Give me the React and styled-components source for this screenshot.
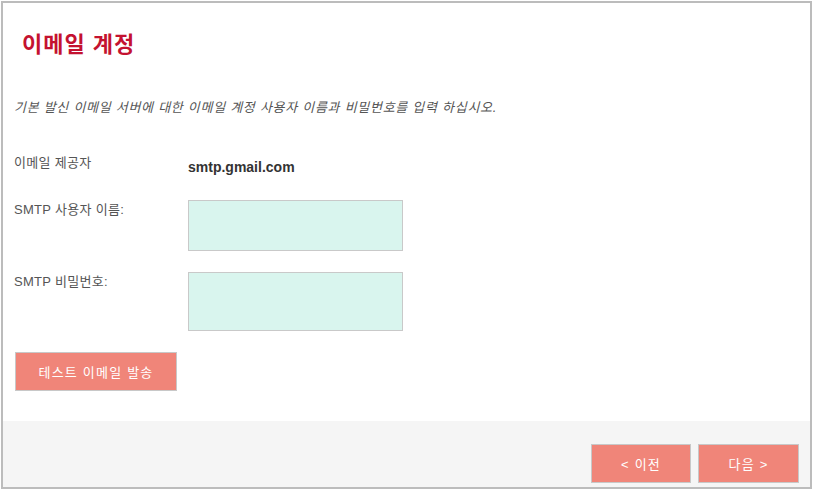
import React from "react";
import styled, { createGlobalStyle } from "styled-components";

const GlobalStyle = createGlobalStyle`
  body {
    margin: 0;
    background: #ffffff;
    font-family: "Liberation Sans", "Noto Sans CJK KR", sans-serif;
  }
`;

export default function App() {
  return (
    <>
      <GlobalStyle />
      <Frame>
        <Main>
          <Title>이메일 계정</Title>
          <Intro>기본 발신 이메일 서버에 대한 이메일 계정 사용자 이름과 비밀번호를 입력 하십시오.</Intro>
          <Form>
            <Row>
              <Label>이메일 제공자</Label>
              <Value>smtp.gmail.com</Value>
            </Row>
            <Row>
              <Label>SMTP 사용자 이름:</Label>
              <Field type="text" $h={51} />
            </Row>
            <Row>
              <Label>SMTP 비밀번호:</Label>
              <Field type="password" $h={59} />
            </Row>
          </Form>
          <Button $w={162}>테스트 이메일 발송</Button>
        </Main>
        <Footer>
          <Button $w={100}>&lt; 이전</Button>
          <Button $w={101}>다음 &gt;</Button>
        </Footer>
      </Frame>
    </>
  );
}

//styled-components

const Frame = styled.div`
  margin: 1px 0 0 1px;
  width: 811px;
  height: 488px;
  box-sizing: border-box;
  border: 2px solid #bcbcbc;
  display: flex;
  flex-direction: column;
  background: #ffffff;
`;

const Main = styled.div`
  flex: 1;
  padding: 30px 0 0 11px;
  display: flex;
  flex-direction: column;
  align-items: flex-start;
`;

const Title = styled.h1`
  margin: 0 0 0 8px;
  font-size: 22px;
  line-height: 24px;
  font-weight: bold;
  letter-spacing: 1px;
  color: #c41230;
`;

const Intro = styled.p`
  margin: 41px 0 0 0;
  font-size: 13px;
  line-height: 20px;
  font-style: italic;
  letter-spacing: 0.72px;
  color: #555555;
`;

const Form = styled.div`
  margin-top: 35px;
  display: flex;
  flex-direction: column;
  gap: 21px;
`;

const Row = styled.div`
  display: grid;
  grid-template-columns: 174px 215px;
  align-items: start;
`;

const Label = styled.div`
  font-size: 13px;
  line-height: 20px;
  letter-spacing: 0.3px;
  color: #555555;
`;

const Value = styled.div`
  font-size: 14px;
  line-height: 20px;
  font-weight: bold;
  color: #333333;
  padding-top: 4px;
  margin-bottom: 2px;
`;

const Field = styled.input`
  width: 215px;
  height: ${(p) => p.$h}px;
  box-sizing: border-box;
  margin: 0;
  border: 1px solid #c9c9c9;
  background: #d9f5ee;
  outline: none;
`;

const Button = styled.button`
  width: ${(p) => p.$w}px;
  height: 39px;
  box-sizing: border-box;
  border: 1px solid #c8c8c8;
  background: #f08579;
  color: #ffffff;
  font-family: "Liberation Sans", "Noto Sans CJK KR", sans-serif;
  font-size: 13px;
  letter-spacing: 1.2px;
  cursor: pointer;
  margin-top: 21px;
  margin-left: 1px;
`;

const Footer = styled.div`
  height: 66px;
  background: #f5f5f5;
  display: flex;
  justify-content: flex-end;
  align-items: flex-end;
  gap: 7px;
  padding: 0 11px 4px 0;
  box-sizing: border-box;
  ${Button} {
    margin: 0;
  }
`;
